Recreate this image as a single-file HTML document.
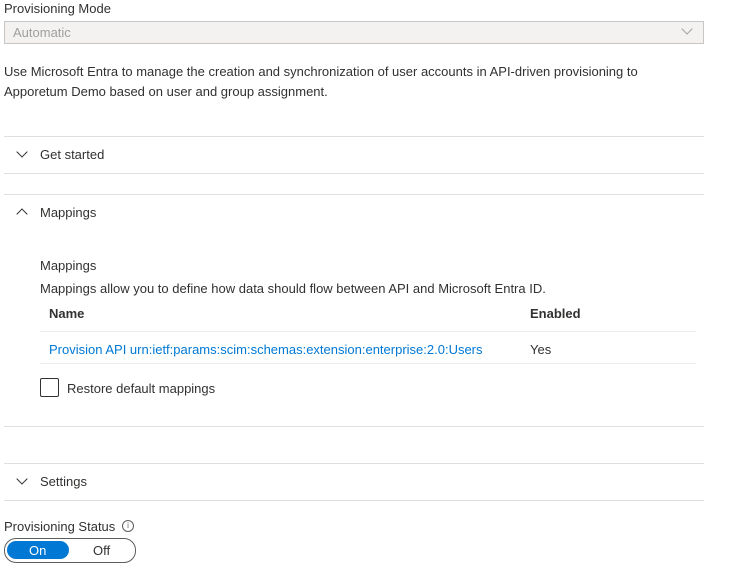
<!DOCTYPE html>
<html><head><style>
body{margin:0;width:731px;height:570px;background:#fff;font-family:"Liberation Sans",sans-serif;font-size:13px;color:#323130;position:relative;overflow:hidden}
.a{position:absolute;white-space:nowrap;line-height:16px}
.hr{position:absolute;left:4px;width:700px;height:1px;background:#e1dfdd}
.chev{position:absolute;width:7px;height:7px;border-right:1.2px solid #323130;border-bottom:1.2px solid #323130}
</style></head><body>
<div class="a" style="left:4px;top:1px">Provisioning Mode</div>
<div style="position:absolute;left:4px;top:21px;width:698px;height:21px;background:#f3f2f1;border:1px solid #c8c6c4"></div>
<div class="a" style="left:13px;top:25px;color:#a19f9d">Automatic</div>
<div class="chev" style="left:683px;top:25px;border-color:#a19f9d;transform:rotate(45deg)"></div>
<div class="a" style="left:4px;top:64px">Use Microsoft Entra to manage the creation and synchronization of user accounts in API-driven provisioning to</div>
<div class="a" style="left:4px;top:84px">Apporetum Demo based on user and group assignment.</div>
<div class="hr" style="top:136px"></div>
<div class="chev" style="left:18px;top:148px;transform:rotate(45deg)"></div>
<div class="a" style="left:40px;top:147px">Get started</div>
<div class="hr" style="top:173px"></div>
<div class="hr" style="top:194px"></div>
<div class="chev" style="left:18px;top:210px;transform:rotate(225deg)"></div>
<div class="a" style="left:40px;top:205px">Mappings</div>
<div class="a" style="left:40px;top:258px">Mappings</div>
<div class="a" style="left:40px;top:281px">Mappings allow you to define how data should flow between API and Microsoft Entra ID.</div>
<div class="a" style="left:49px;top:306px;font-weight:bold">Name</div>
<div class="a" style="left:530px;top:306px;font-weight:bold">Enabled</div>
<div style="position:absolute;left:40px;top:331px;width:656px;height:1px;background:#edebe9"></div>
<div class="a" style="left:49px;top:342px;color:#0078d4">Provision API urn:ietf:params:scim:schemas:extension:enterprise:2.0:Users</div>
<div class="a" style="left:530px;top:342px">Yes</div>
<div style="position:absolute;left:40px;top:363px;width:656px;height:1px;background:#edebe9"></div>
<div style="position:absolute;left:40px;top:378px;width:17px;height:17px;border:1px solid #323130;border-radius:2px"></div>
<div class="a" style="left:67px;top:381px">Restore default mappings</div>
<div class="hr" style="top:426px"></div>
<div class="hr" style="top:463px"></div>
<div class="chev" style="left:18px;top:475px;transform:rotate(45deg)"></div>
<div class="a" style="left:40px;top:474px">Settings</div>
<div class="hr" style="top:500px"></div>
<div class="a" style="left:4px;top:519px">Provisioning Status</div>
<div style="position:absolute;left:122px;top:520px;width:10px;height:10px;border:1px solid #605e5c;border-radius:50%;font-size:8px;line-height:10px;text-align:center;color:#605e5c">i</div>
<div style="position:absolute;left:4px;top:538px;width:130px;height:23px;border:1px solid #605e5c;border-radius:12px"></div>
<div style="position:absolute;left:7px;top:541px;width:62px;height:18px;background:#0078d4;border-radius:9px"></div>
<div class="a" style="left:29px;top:543px;color:#fff">On</div>
<div class="a" style="left:93px;top:543px">Off</div>
</body></html>
